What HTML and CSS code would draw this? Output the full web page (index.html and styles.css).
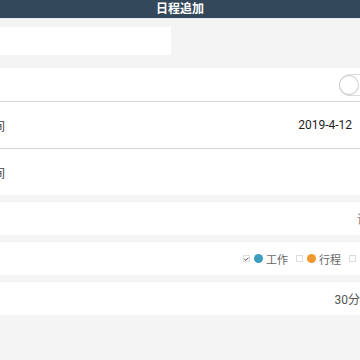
FILE: index.html
```html
<!DOCTYPE html>
<html lang="ja">
<head>
<meta charset="utf-8">
<link rel="stylesheet" href="styles.css">
</head>
<body>
<div class="page">
  <div class="header">日程追加</div>
  <div class="top-area">
    <div class="title-input"></div>
  </div>
  <div class="row row-switch">
    <span class="label"></span>
    <span class="switch"><span class="knob"></span></span>
  </div>
  <div class="row row-tall">
    <span class="label cut">開始時间</span>
    <span class="value">2019-4-12</span>
  </div>
  <div class="row row-tall no-border">
    <span class="label cut">終了時间</span>
    <span class="value faint">終</span>
  </div>
  <div class="gap"></div>
  <div class="row no-border">
    <span class="label"></span>
    <span class="value dim cut-right">请选择</span>
  </div>
  <div class="gap"></div>
  <div class="row no-border">
    <span class="label"></span>
    <div class="cats">
      <span class="check checked">
        <svg width="5" height="4" viewBox="0 0 5 4"><path d="M0.4 2 L1.9 3.3 L4.6 0.6" fill="none" stroke="#333" stroke-width="0.9"/></svg>
      </span>
      <span class="dot blue"></span>
      <span class="cat-text">工作</span>
      <span class="check"></span>
      <span class="dot orange"></span>
      <span class="cat-text">行程</span>
      <span class="check last"></span>
    </div>
  </div>
  <div class="gap"></div>
  <div class="row no-border">
    <span class="label"></span>
    <span class="value dim cut-right2">30分钟前</span>
  </div>
</div>
</body>
</html>
```
FILE: styles.css
```css
html, body {
  margin: 0;
  padding: 0;
}
body {
  width: 360px;
  height: 360px;
  overflow: hidden;
  background: #f4f4f4;
  font-family: Roboto, "Noto Sans CJK SC", "Noto Sans CJK JP", sans-serif;
}
.page {
  width: 360px;
  overflow: hidden;
}
.header {
  height: 18px;
  line-height: 18px;
  background: #34485c;
  color: #fff;
  font-size: 12px;
  font-weight: bold;
  text-align: center;
  border-bottom: 1px solid #e4e9f0;
}
.top-area {
  background: #f4f4f4;
  padding: 8px 0 13px;
}
.title-input {
  width: 171px;
  height: 28px;
  background: #fff;
}
.row {
  background: #fff;
  height: 33px;
  display: flex;
  align-items: center;
  justify-content: space-between;
  border-bottom: 1px solid #d4d4d4;
  font-size: 12px;
  color: #222;
}
.row.no-border {
  border-bottom: none;
}
.row-tall {
  height: 46px;
}
.label.cut {
  margin-left: -43px;
  font-size: 12px;
  color: #444;
}
.value {
  padding-right: 8px;
  color: #1e1e1e;
}
.value.faint {
  color: #ddd;
  margin-right: -19px;
  padding-right: 0;
}
.value.dim {
  color: #777;
}
.value.cut-right {
  margin-right: -33px;
  padding-right: 0;
}
.value.cut-right2 {
  margin-right: -24px;
  padding-right: 0;
  color: #555;
}
.switch {
  width: 40px;
  height: 20px;
  border: 1px solid #dcdcdc;
  border-radius: 11px;
  margin-right: -21px;
  background: #fff;
  display: flex;
  align-items: center;
}
.knob {
  width: 18px;
  height: 18px;
  border-radius: 50%;
  background: #fff;
  box-shadow: 0 0 0 1px #d0d0d0, 0 1px 2px rgba(0,0,0,0.15);
}
.gap {
  height: 7px;
}
.cats {
  display: flex;
  align-items: center;
  margin-right: 4px;
  font-size: 11px;
  color: #666;
}
.check {
  box-sizing: border-box;
  width: 7px;
  height: 7px;
  border: 1px solid #ddd;
  background: #fff;
  display: flex;
  align-items: center;
  justify-content: center;
  margin-right: 4px;
}
.check.last {
  margin-right: 0;
}
.dot {
  width: 9px;
  height: 9px;
  border-radius: 50%;
  margin-right: 3px;
}
.dot.blue {
  background: #3b9dbf;
}
.dot.orange {
  background: #f0992e;
}
.cat-text {
  margin-right: 8px;
}
```
